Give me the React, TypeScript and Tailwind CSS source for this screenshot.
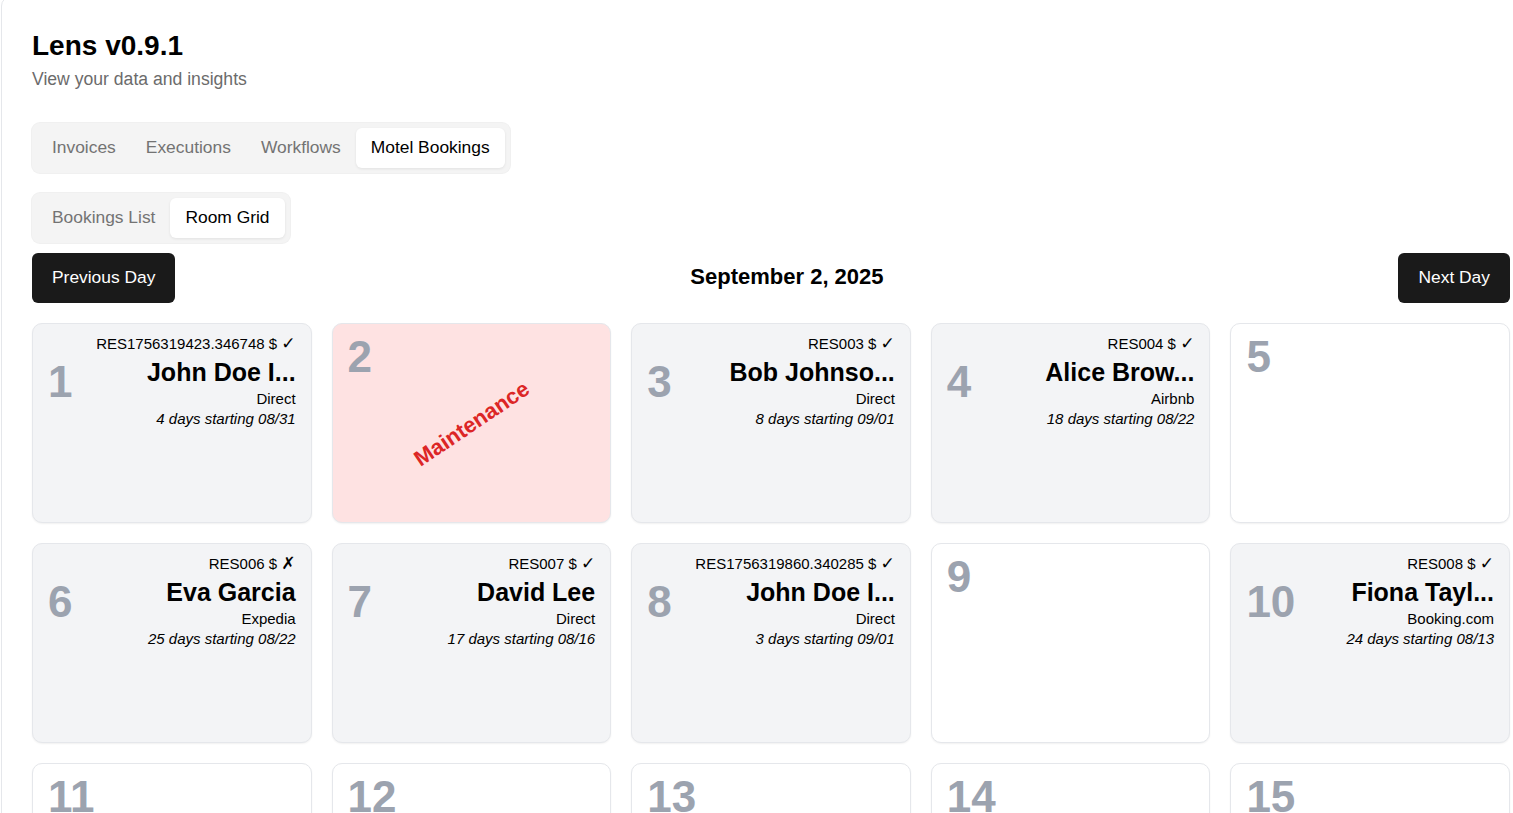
import React from "react";

// Room grid for the motel bookings view

type Booking = {
  id: string;
  paid: boolean;
  name: string;
  source: string;
  stay: string;
};

type Room = {
  number: number;
  booking?: Booking;
  maintenance?: boolean;
};

const ROOMS: Room[] = [
  { number: 1, booking: { id: "RES1756319423.346748", paid: true, name: "John Doe I...", source: "Direct", stay: "4 days starting 08/31" } },
  { number: 2, maintenance: true },
  { number: 3, booking: { id: "RES003", paid: true, name: "Bob Johnso...", source: "Direct", stay: "8 days starting 09/01" } },
  { number: 4, booking: { id: "RES004", paid: true, name: "Alice Brow...", source: "Airbnb", stay: "18 days starting 08/22" } },
  { number: 5 },
  { number: 6, booking: { id: "RES006", paid: false, name: "Eva Garcia", source: "Expedia", stay: "25 days starting 08/22" } },
  { number: 7, booking: { id: "RES007", paid: true, name: "David Lee", source: "Direct", stay: "17 days starting 08/16" } },
  { number: 8, booking: { id: "RES1756319860.340285", paid: true, name: "John Doe I...", source: "Direct", stay: "3 days starting 09/01" } },
  { number: 9 },
  { number: 10, booking: { id: "RES008", paid: true, name: "Fiona Tayl...", source: "Booking.com", stay: "24 days starting 08/13" } },
  { number: 11 },
  { number: 12 },
  { number: 13 },
  { number: 14 },
  { number: 15 },
];

function TabList({ tabs, active }: { tabs: string[]; active: string }) {
  return (
    <div className="inline-flex h-[50px] items-center rounded-[8px] bg-[#f4f4f4] p-[5px] shadow-[0_0_0_1px_#f0f0f0]">
      {tabs.map((tab) => (
        <div
          key={tab}
          className={
            tab === active
              ? "flex h-[40px] items-center rounded-[6px] bg-white px-[15px] pb-[2px] text-[17.4px] text-black shadow-[0_1px_3px_rgba(0,0,0,0.08)]"
              : "flex h-[40px] items-center px-[15px] pb-[2px] text-[17.4px] text-[#737373]"
          }
        >
          {tab}
        </div>
      ))}
    </div>
  );
}

function RoomCard({ room }: { room: Room }) {
  const { booking } = room;

  if (room.maintenance) {
    return (
      <div className="relative h-[200px] overflow-hidden rounded-[10px] border border-[#e5e7eb] bg-[#fee2e2] px-[15px] pt-[11px] shadow-[0_1px_2px_rgba(0,0,0,0.06)]">
        <div className="text-[44px] font-bold leading-none text-[#9ca3af]">{room.number}</div>
        <div className="absolute inset-0 flex items-center justify-center">
          <span className="-rotate-[34deg] text-[22px] font-bold text-[#dc2626]">Maintenance</span>
        </div>
      </div>
    );
  }

  if (!booking) {
    return (
      <div className="h-[200px] rounded-[10px] border border-[#e5e7eb] bg-white px-[15px] pt-[11px] shadow-[0_1px_2px_rgba(0,0,0,0.06)]">
        <div className="text-[44px] font-bold leading-none text-[#9ca3af]">{room.number}</div>
      </div>
    );
  }

  return (
    <div className="h-[200px] rounded-[10px] border border-[#e5e7eb] bg-[#f3f4f6] px-[15px] pt-[11px] shadow-[0_1px_2px_rgba(0,0,0,0.06)]">
      <div className="flex items-center justify-between">
        <div className="text-[44px] font-bold leading-none text-[#9ca3af]">{room.number}</div>
        <div className="flex flex-col items-end text-right text-black">
          <div className="h-[18px] text-[15px] leading-[18px]">
            {booking.id} ${" "}
            <span className="font-['DejaVu_Sans'] text-[17px] font-bold leading-none">{booking.paid ? "✓" : "✗"}</span>
          </div>
          <div className="mt-[5px] text-[25px] font-bold leading-[28px]">{booking.name}</div>
          <div className="mt-[4px] text-[15px] leading-[18px]">{booking.source}</div>
          <div className="mt-[2px] text-[15px] italic leading-[18px]">{booking.stay}</div>
        </div>
      </div>
    </div>
  );
}

export default function App() {
  return (
    <div className="h-screen overflow-hidden bg-white font-['Liberation_Sans',Arial,sans-serif] text-black">
      <div className="-mt-[4px] ml-[1px] w-[1540px] rounded-[10px] border border-[#e5e7eb] px-[30px] pt-[32px] pb-[30px]">
        <h1 className="text-[28px] font-bold leading-[34px]">Lens v0.9.1</h1>
        <p className="mt-[3px] text-[17.6px] leading-[26px] text-[#6b6b6b]">View your data and insights</p>

        <div className="mt-[31px]">
          <TabList tabs={["Invoices", "Executions", "Workflows", "Motel Bookings"]} active="Motel Bookings" />
        </div>
        <div className="mt-[20px]">
          <TabList tabs={["Bookings List", "Room Grid"]} active="Room Grid" />
        </div>

        <div className="mt-[10px] flex items-center justify-between">
          <button className="h-[50px] rounded-[6px] bg-[#1a1a1a] px-[20px] pb-[2px] text-[17.4px] text-white">Previous Day</button>
          <h2 className="-mt-[3px] text-[22px] font-bold">September 2, 2025</h2>
          <button className="h-[50px] rounded-[6px] bg-[#1a1a1a] px-[20px] pb-[2px] text-[17.4px] text-white">Next Day</button>
        </div>

        <div className="mt-[20px] grid grid-cols-5 gap-[20px]">
          {ROOMS.map((room) => (
            <RoomCard key={room.number} room={room} />
          ))}
        </div>
      </div>
    </div>
  );
}
